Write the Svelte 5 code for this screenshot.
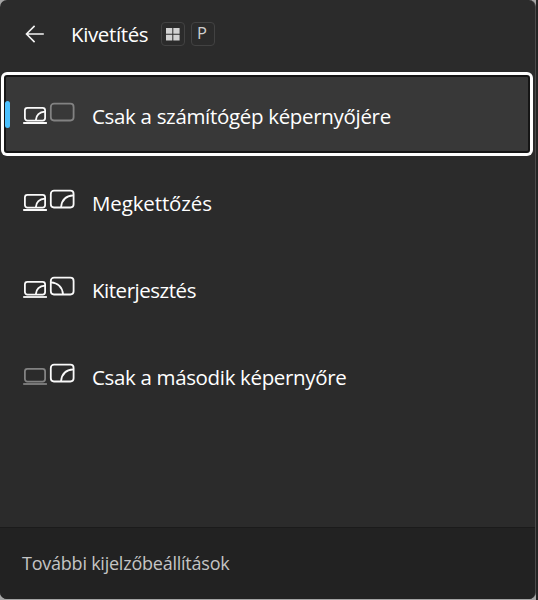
<!-- App.svelte -->
<script>
    // laptop / monitor: 'off' is dimmed, 'left' and 'right' tell which corner the shared area is drawn in
    const modes = [
        { id: 'pc', label: 'Csak a számítógép képernyőjére', laptop: 'right', monitor: 'off', spacing: -0.32 },
        { id: 'duplicate', label: 'Megkettőzés', laptop: 'right', monitor: 'right', spacing: -0.13 },
        { id: 'extend', label: 'Kiterjesztés', laptop: 'right', monitor: 'left', spacing: -0.47 },
        { id: 'second', label: 'Csak a második képernyőre', laptop: 'off', monitor: 'right', spacing: -0.34 }
    ];

    let selected = $state('pc');
</script>

<div class="screen">
    <div class="panel">
        <header>
            <button class="back" aria-label="Vissza">
                <svg width="20" height="20" viewBox="0 0 20 20">
                    <path d="M18.8 10H1.5M9.6 1.9L1.5 10l8.1 8.1" />
                </svg>
            </button>
            <h1>Kivetítés</h1>
            <kbd>
                <svg width="14" height="13" viewBox="0 0 14 13">
                    <path d="M0 0h6.3v5.8H0zM7.3 0h6.3v5.8H7.3zM0 6.8h6.3v5.8H0zM7.3 6.8h6.3v5.8H7.3z" />
                </svg>
            </kbd>
            <kbd class="letter">P</kbd>
        </header>

        <div class="modes">
            {#each modes as mode}
                <button class="mode" class:selected={selected === mode.id} onclick={() => (selected = mode.id)}>
                    <svg class="icon" width="52" height="23" viewBox="0 0 52 23">
                        <g class:off={mode.laptop === 'off'}>
                            <rect x="1.9" y="5.8" width="20.2" height="12.8" rx="2.5" />
                            <path d="M0.2 21H23.9" />
                            {#if mode.laptop === 'right'}
                                <path d="M12.8 18.4c.4-5 3.8-8.4 9.2-8.7" />
                            {/if}
                        </g>
                        <g class:off={mode.monitor === 'off'}>
                            <rect x="27.8" y="1.7" width="22.8" height="16.8" rx="3.2" />
                            {#if mode.monitor === 'right'}
                                <path d="M38 18.3c.6-6.8 4.8-11.6 12.4-12" />
                            {:else if mode.monitor === 'left'}
                                <path d="M28 6.3c7 .4 11.4 5.2 12 12" />
                            {/if}
                        </g>
                    </svg>
                    <span style="letter-spacing: {mode.spacing}px">{mode.label}</span>
                </button>
            {/each}
        </div>

        <footer>További kijelzőbeállítások</footer>
    </div>
</div>

<style>
    :global(body) {
        margin: 0;
        background: #a5a5a5;
    }

    .screen {
        width: 538px;
        height: 600px;
        box-sizing: border-box;
        padding-right: 2px;
        background: linear-gradient(to right, transparent 536px, #242424 536px);
        font-family: "Segoe UI", "Open Sans", "Noto Sans", sans-serif;
        color: #fff;
    }

    .panel {
        display: flex;
        flex-direction: column;
        height: 599px;
        box-sizing: border-box;
        border-right: 1px solid #4a4a4a;
        border-radius: 7px;
        background: #2b2b2b;
        overflow: hidden;
    }

    header {
        display: flex;
        align-items: center;
        height: 68px;
        padding-left: 25px;
        flex-shrink: 0;
    }

    button {
        border: none;
        background: none;
        color: inherit;
        font: inherit;
        padding: 0;
    }

    .back {
        display: flex;
        width: 20px;
        margin-right: 26px;
    }

    .back svg {
        fill: none;
        stroke: #f4f4f4;
        stroke-width: 1.6;
    }

    h1 {
        width: 90px;
        margin: 0;
        font-size: 20.5px;
        font-weight: 400;
        letter-spacing: -0.37px;
        white-space: nowrap;
    }

    kbd {
        display: flex;
        align-items: center;
        justify-content: center;
        width: 24px;
        height: 24px;
        margin-right: 6px;
        box-sizing: border-box;
        border: 1.5px solid #424242;
        border-radius: 4px;
        color: #cfcfcf;
        font-family: inherit;
        font-size: 16.5px;
        line-height: 1;
    }

    kbd svg {
        fill: #d2d2d2;
    }

    .letter {
        padding: 0 2px 2px 0;
    }

    .modes {
        display: flex;
        flex-direction: column;
        gap: 3px;
        flex-grow: 1;
        padding: 4px 2px 0 1px;
    }

    .mode {
        display: flex;
        align-items: center;
        position: relative;
        height: 84px;
        box-sizing: border-box;
        padding: 4px 0 0 22px;
        border-radius: 6px;
        text-align: left;
        font-size: 20.5px;
    }

    .mode.selected {
        background: #383838;
        box-shadow: inset 0 0 0 3px #fff, inset 0 0 0 5px #151515;
    }

    /* accent bar on the left of the chosen mode */
    .mode.selected::before {
        content: "";
        position: absolute;
        left: 4px;
        top: 29px;
        width: 5px;
        height: 27px;
        border-radius: 2.5px;
        background: #4cc2ff;
    }

    .icon {
        margin: -5px 17px 0 0;
        fill: none;
        stroke: #fafafa;
        stroke-width: 1.8;
    }

    .off {
        stroke: #828282;
    }

    footer {
        display: flex;
        align-items: center;
        height: 72px;
        box-sizing: border-box;
        padding: 0 0 2px 22px;
        background: #222;
        border-top: 1px solid #1b1b1b;
        color: #c4c4c4;
        font-size: 18px;
        letter-spacing: -0.23px;
    }
</style>
